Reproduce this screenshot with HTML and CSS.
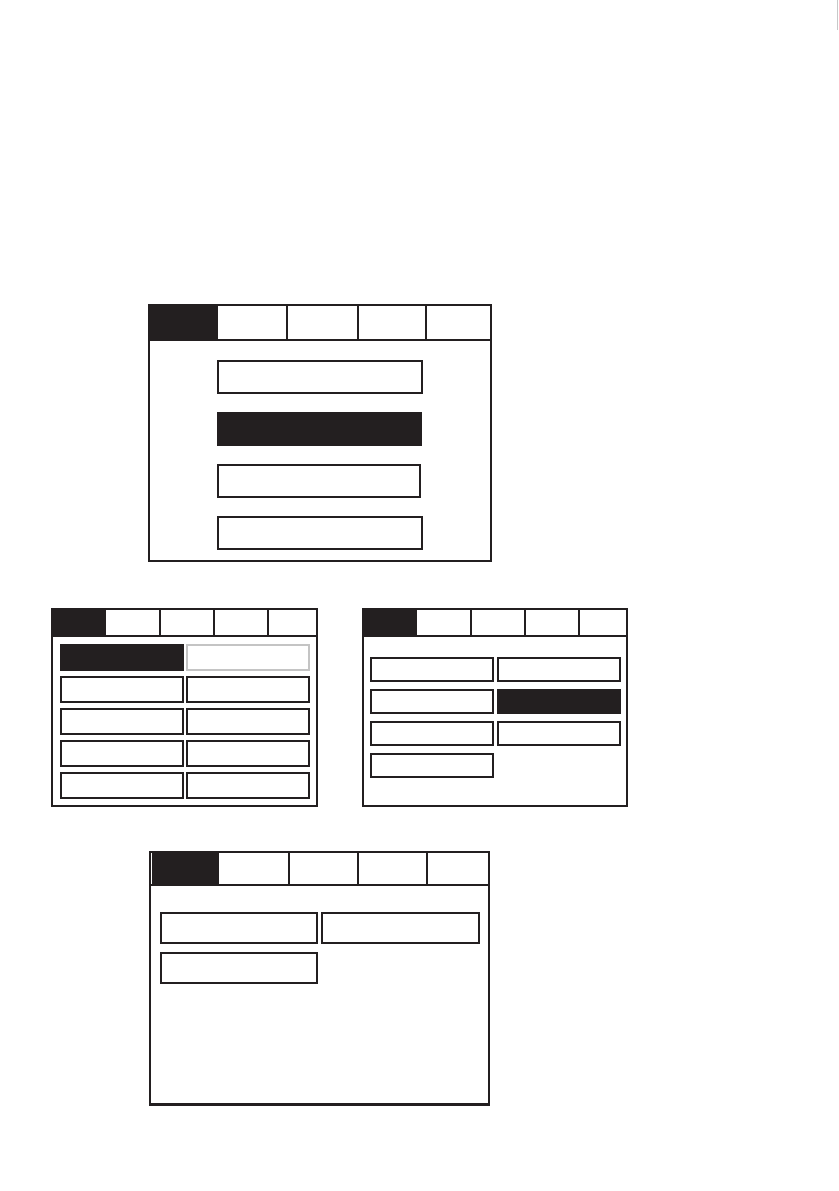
FILE: index.html
```html
<!DOCTYPE html>
<html lang="en">
<head>
<meta charset="utf-8">
<title>Menu screens</title>
<link rel="stylesheet" href="styles.css">
</head>
<body>
<div class="page-mark"></div>

<section class="panel panel-a">
  <div class="tabs">
    <div class="tab active"></div>
    <div class="tab"></div>
    <div class="tab"></div>
    <div class="tab"></div>
    <div class="tab"></div>
  </div>
  <div class="list-a">
    <div class="btn btn-a"></div>
    <div class="btn btn-a btn-a2 dark"></div>
    <div class="btn btn-a btn-a3"></div>
    <div class="btn btn-a btn-a4"></div>
  </div>
</section>

<div class="row">
  <section class="panel panel-b">
    <div class="tabs">
      <div class="tab active"></div>
      <div class="tab"></div>
      <div class="tab"></div>
      <div class="tab"></div>
      <div class="tab"></div>
    </div>
    <div class="grid-b">
      <div class="btn dark"></div>
      <div class="btn muted"></div>
      <div class="btn"></div>
      <div class="btn"></div>
      <div class="btn"></div>
      <div class="btn"></div>
      <div class="btn"></div>
      <div class="btn"></div>
      <div class="btn"></div>
      <div class="btn"></div>
    </div>
  </section>

  <section class="panel panel-c">
    <div class="tabs">
      <div class="tab active"></div>
      <div class="tab"></div>
      <div class="tab"></div>
      <div class="tab"></div>
      <div class="tab"></div>
    </div>
    <div class="grid-c">
      <div class="btn"></div>
      <div class="btn"></div>
      <div class="btn"></div>
      <div class="btn dark"></div>
      <div class="btn"></div>
      <div class="btn"></div>
      <div class="btn"></div>
    </div>
  </section>
</div>

<section class="panel panel-d">
  <div class="tabs">
    <div class="tab active"></div>
    <div class="tab"></div>
    <div class="tab"></div>
    <div class="tab"></div>
    <div class="tab"></div>
  </div>
  <div class="grid-d">
    <div class="btn"></div>
    <div class="btn"></div>
    <div class="btn"></div>
  </div>
</section>
</body>
</html>
```

FILE: styles.css
```css
* {
  box-sizing: border-box;
}

html, body {
  margin: 0;
  padding: 0;
  background: #ffffff;
  font-family: "Liberation Sans", Arial, sans-serif;
}

body {
  width: 839px;
  min-height: 1191px;
}

.page-mark {
  margin-left: 837px;
  width: 1px;
  height: 30px;
  background: #c8c8c8;
}

.panel {
  border: 2px solid #231f20;
  background: #ffffff;
}

.tabs {
  display: grid;
  border-bottom: 2px solid #231f20;
}

.tab {
  border-left: 2px solid #231f20;
}

.tab.active {
  background: #231f20;
  border-left: none;
}

.tab.active + .tab {
  border-left: none;
}

.btn {
  border: 2px solid #231f20;
  background: #ffffff;
}

.btn.dark {
  background: #231f20;
}

.btn.muted {
  border-color: #c4c4c4;
}

/* Panel A: single column menu */
.panel-a {
  margin-top: 274px;
  margin-left: 148px;
  width: 344px;
  height: 258px;
}

.panel-a .tabs {
  height: 35px;
  grid-template-columns: 68px 68px 71px 68px 1fr;
}

.list-a {
  display: flex;
  flex-direction: column;
  padding: 19px 0 0 67px;
  gap: 18px;
}

.btn-a {
  width: 206px;
  height: 34px;
}

.btn-a2 {
  width: 205px;
}

.btn-a3 {
  width: 204px;
}

/* Row with two panels */
.row {
  display: flex;
  gap: 44px;
  margin-top: 46px;
  padding-left: 51px;
}

.panel-b {
  width: 267px;
  height: 199px;
}

.panel-c {
  width: 266px;
  height: 199px;
}

.panel-b .tabs,
.panel-c .tabs {
  height: 27px;
  grid-template-columns: 53px 53px 54px 54px 1fr;
}

.grid-b {
  display: grid;
  grid-template-columns: 124px 124px;
  grid-auto-rows: 27px;
  column-gap: 2px;
  row-gap: 5px;
  padding: 7px 0 0 7px;
}

.grid-c {
  display: grid;
  grid-template-columns: 124px 124px;
  grid-auto-rows: 25px;
  column-gap: 3px;
  row-gap: 7px;
  padding: 20px 0 0 6px;
}

/* Panel D */
.panel-d {
  margin-top: 44px;
  margin-left: 149px;
  width: 341px;
  height: 255px;
  border-bottom-width: 3px;
}

.panel-d .tabs {
  height: 33px;
  grid-template-columns: 68px 69px 69px 69px 1fr;
}

.panel-d .tab.active {
  margin-left: 1px;
  margin-bottom: -2px;
}

.grid-d {
  display: grid;
  grid-template-columns: 158px 159px;
  grid-auto-rows: 32px;
  column-gap: 3px;
  row-gap: 8px;
  padding: 26px 0 0 9px;
}
```
